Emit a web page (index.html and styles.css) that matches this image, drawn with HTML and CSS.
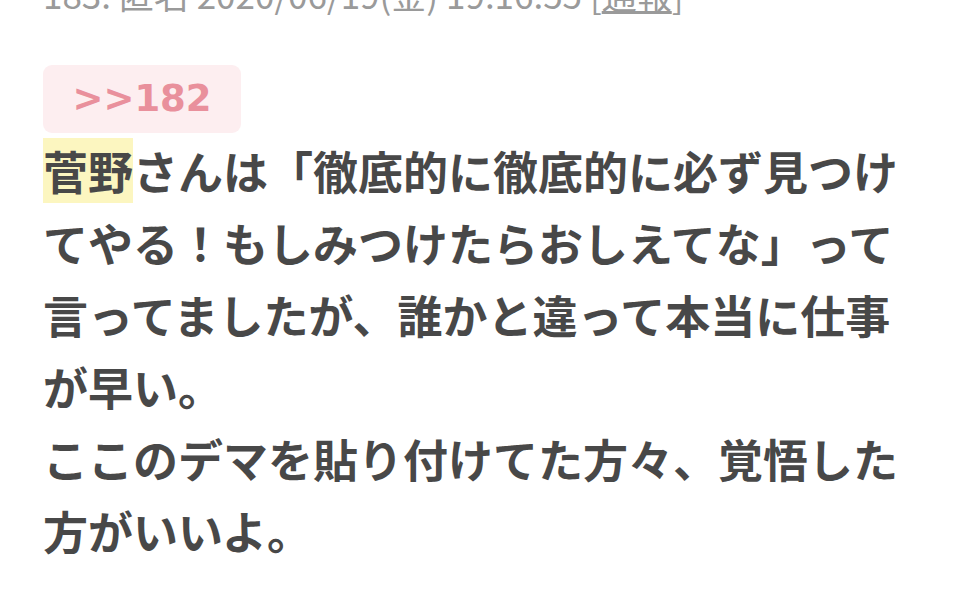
FILE: index.html
```html
<!DOCTYPE html>
<html lang="ja">
<head>
<meta charset="utf-8">
<link rel="stylesheet" href="styles.css">
</head>
<body>
<div class="post">
  <div class="meta">183: 匿名 2020/06/19(金) 19:16:55 [<span class="report">通報</span>]</div>
  <div class="anchor">&gt;&gt;182</div>
  <div class="body"><span class="hl">菅野</span>さんは「徹底的に徹底的に必ず見つけてやる！もしみつけたらおしえてな」って言ってましたが、誰かと違って本当に仕事が早い。<br>ここのデマを貼り付けてた方々、覚悟した方がいいよ。</div>
</div>
</body>
</html>
```
FILE: styles.css
```css
html, body {
  margin: 0;
  padding: 0;
  background: #ffffff;
}
.post {
  padding: 0 0 0 43px;
  width: 870px;
  font-family: "Noto Sans CJK JP", "Noto Sans", sans-serif;
}
.meta {
  margin-top: -26px;
  height: 40px;
  font-size: 35px;
  line-height: 40px;
  color: #9a9a9a;
  white-space: nowrap;
}
.report {
  text-decoration: underline;
}
.anchor {
  display: inline-block;
  margin-top: 51px;
  width: 198px;
  height: 68px;
  box-sizing: border-box;
  border-radius: 9px;
  background: #fdeef0;
  color: #e9909c;
  font-family: "DejaVu Sans", sans-serif;
  font-weight: bold;
  font-size: 37px;
  line-height: 68px;
  text-align: center;
}
.body {
  margin-top: 2px;
  font-size: 45px;
  line-height: 72px;
  font-weight: bold;
  color: #484848;
}
.hl {
  background: #fcf6c0;
}
```
